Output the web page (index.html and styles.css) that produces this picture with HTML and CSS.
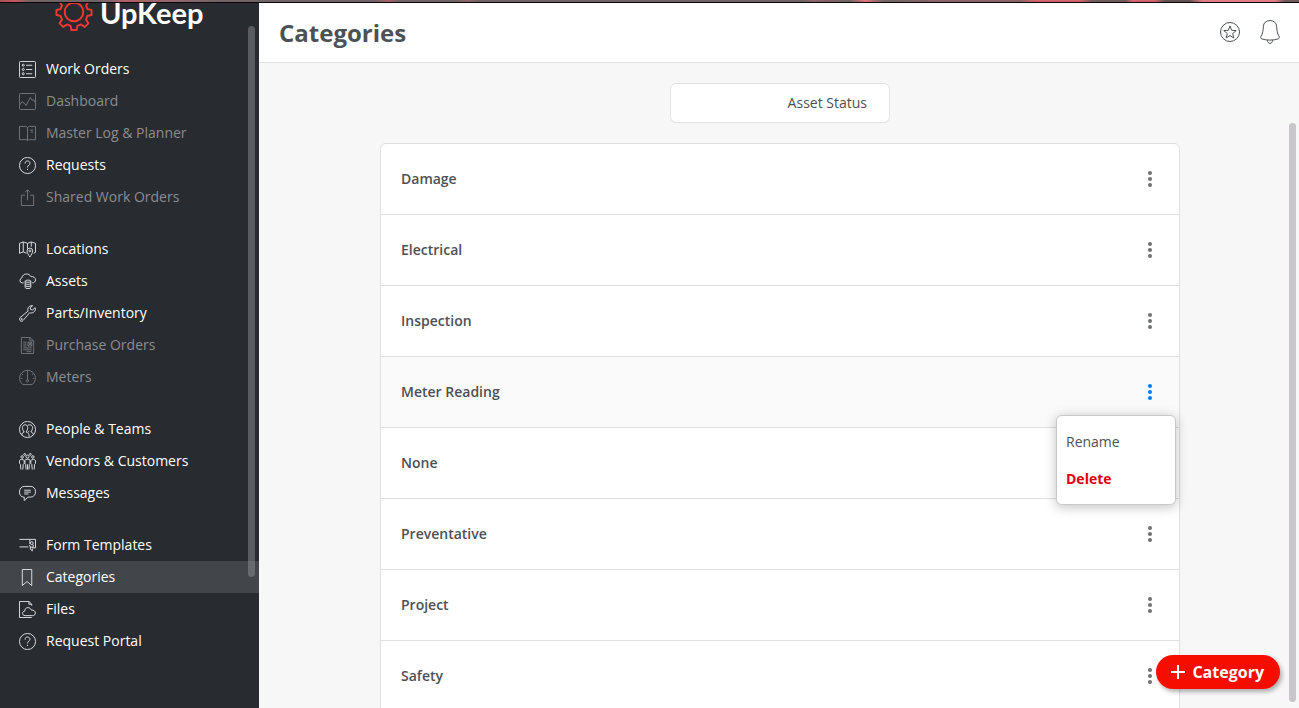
FILE: index.html
```html
<!DOCTYPE html>
<html lang="en">
<head>
<meta charset="utf-8">
<title>Categories - UpKeep</title>
<link rel="stylesheet" href="styles.css">
</head>
<body>
<div class="strip"></div>
<div class="app">
  <aside class="sidebar">
    <a class="logo" href="#">
      <svg class="gear" viewBox="0 0 40 40"><circle cx="20" cy="20" r="9.8"/><path d="M17.300 1.700h5.400l.9 4.600 3.800 1.600 4-2.500 3.800 3.800-2.600 3.900 1.600 3.900 4.300.9v5.300l-4.300.9-1.600 3.900 2.600 3.900-3.800 3.800-4-2.600-3.800 1.600-.9 4.300h-5.400l-.9-4.300-3.800-1.600-4 2.600-3.800-3.800 2.600-3.900-1.600-3.900-4.300-.9v-5.300l4.300-.9 1.600-3.900-2.600-3.900 3.800-3.800 4 2.500 3.800-1.600z"/></svg>
      <span>UpKeep</span>
    </a>
    <nav class="nav">
      <div class="group">
        <a class="item" href="#"><svg class="icon" viewBox="0 0 18 18"><rect x=".5" y=".5" width="17" height="17" rx="1"/><circle cx="4.500" cy="4.500" r="1.100"/><circle cx="4.500" cy="9" r="1.100"/><circle cx="4.500" cy="13.500" r="1.100"/><path d="M7.500 4.500H14M7.500 9H14M7.500 13.500H14"/></svg>Work Orders</a>
        <a class="item dim" href="#"><svg class="icon" viewBox="0 0 18 18"><rect x=".5" y=".5" width="17" height="17" rx="1"/><path d="M.5 13l2.700-3.800 2.500 1.600 1.800 2.400L12 4.700l1.800 3 1.400-.7 2.300 3.500"/></svg>Dashboard</a>
        <a class="item dim" href="#"><svg class="icon" viewBox="0 0 18 18"><path d="M9 3.200C8.500 2 8 1.500 7 1.500H.5v14H7c1 0 1.500.3 2 1 .5-.7 1-1 2-1h6.500v-14H11c-1 0-1.500.5-2 1.700v13.300M11.500 5.500H15M12.500 7.500H15"/></svg>Master Log &amp; Planner</a>
        <a class="item" href="#"><svg class="icon" viewBox="0 0 18 18"><circle cx="9" cy="9" r="8.500"/><path d="M6.500 7C6.500 5 7.500 4.200 9 4.200s2.600.9 2.600 2.400C11.600 8.600 9 8.700 9 11M9 12.500v1.200"/></svg>Requests</a>
        <a class="item dim" href="#"><svg class="icon" viewBox="0 0 18 18"><path d="M6.500 6.500h-4v11h13v-11h-4M9 12V1M6.500 3.500L9 .8l2.500 2.700"/></svg>Shared Work Orders</a>
      </div>
      <div class="group">
        <a class="item" href="#"><svg class="icon" viewBox="0 0 18 18"><path d="M8 13l-3.500-1.500-4 1.500V2.500L4.500 1 9 2.500 13 1l4.500 1.500V12l-2 1M4.500 1v10.500M9 2.500V8M13 1v5M11.500 17C10 14.500 8.500 12.500 8.500 10.500a3 3 0 0 1 6 0c0 2-1.500 4-3 6.500z"/><circle cx="11.500" cy="10.500" r="1"/></svg>Locations</a>
        <a class="item" href="#"><svg class="icon" viewBox="0 0 18 18"><path d="M5 10.500H3.500a2.600 2.600 0 0 1-.6-5.100C3.500 2.500 5.500 1 8 1c2 0 3.500 1 4.500 2.700C15.500 3.500 17.500 5.200 17.500 7.300c0 1.900-1.500 3.200-3.500 3.200"/><ellipse cx="9.500" cy="8.700" rx="3" ry="1.200"/><path d="M6.500 8.700v6.600c0 1.600 6 1.600 6 0V8.700M6.500 11c0 1.500 6 1.500 6 0M6.500 13.200c0 1.500 6 1.500 6 0"/></svg>Assets</a>
        <a class="item" href="#"><svg class="icon" viewBox="0 0 18 18"><path d="M14.500.8C12 .2 9.300 2 9.300 4.800c0 .7.100 1.200.3 1.700L1.200 13.300c-1 .9-1 2.300-.1 3.200.9 1 2.400.9 3.200-.1l7-8.200c3 1 6-.9 6.100-4.100l-.3-1.400-2.600 2.500-2.200-.4-.5-2.100z"/><circle cx="2.800" cy="14.900" r=".7"/></svg>Parts/Inventory</a>
        <a class="item dim" href="#"><svg class="icon" viewBox="0 0 18 18"><path d="M2.500.5h9l4 3.500v13.500h-13zM11.500.5V4h4M4.500 5.500H8M4.500 7.500H8M4.500 9.500H8M4.500 11.500h9M4.500 13.500h9M8 15.500h5M9.500 5.500h4v4h-4zM9.500 5.500l4 4M13.500 5.500l-4 4"/></svg>Purchase Orders</a>
        <a class="item dim" href="#"><svg class="icon" viewBox="0 0 18 18"><path d="M4 16.500a8.400 8.400 0 1 1 10 0zM9 3.500v8M9 1v2M3 5l1.200 1M15 5l-1.200 1M2 10h1.500M14.500 10H16"/><circle cx="9" cy="12.500" r="1.200"/></svg>Meters</a>
      </div>
      <div class="group">
        <a class="item" href="#"><svg class="icon" viewBox="0 0 18 18"><circle cx="9" cy="9" r="8.500"/><path d="M3 15c0-2 .7-2.500 2.500-3.300C4 10 3.700 8.500 3.700 7 3.700 5 5 4 6.500 4S9.200 5 9.200 7c0 1.500-.5 3-1.700 4.700 2.300.8 3.200 1.600 3.200 4.800M9 5.200c.7-1 1.300-1.200 2.400-1.200C13.200 4 14.300 5.200 14.300 7c0 1.800-.6 3.200-1.800 4.500 2 .7 2.500 1.300 2.700 3M9.500 11.700l1.200-.7"/></svg>People &amp; Teams</a>
        <a class="item" href="#"><svg class="icon" viewBox="0 0 18 18"><circle cx="9" cy="3.800" r="1.600"/><circle cx="3.300" cy="4.200" r="1.300"/><circle cx="14.700" cy="4.200" r="1.300"/><circle cx="6" cy="1.500" r="1"/><circle cx="12" cy="1.500" r="1"/><path d="M7.500 17.500L7 12l-.7-1V7.500c0-1.200 5.400-1.200 5.400 0V11l-.7 1-.5 5.500M9 12v5.500M2 17.500L1.500 12l-1-1V8c0-1.500 4.500-1.500 5 0v3l-1 1-.5 5.500M16 17.500l.5-5.500 1-1V8c0-1.500-4.500-1.500-5 0v3l1 1 .5 5.500"/></svg>Vendors &amp; Customers</a>
        <a class="item" href="#"><svg class="icon" viewBox="0 0 18 18"><path d="M5.500 16.500v-3.700H4.800C2.200 12.800.5 10.500.5 7.500c0-3.500 2-6 5-6h7c3 0 5 2.500 5 5.600 0 3.200-2 5.700-5 5.700H9.500zM5.500 5.500h7M5.500 7.500h7M5.500 9.500H10"/></svg>Messages</a>
      </div>
      <div class="group">
        <a class="item" href="#"><svg class="icon" viewBox="0 0 18 18"><path d="M.5 2.500h17v9h-3M.5 10.500h9.500M11.500 2.500v5"/><circle cx="13.500" cy="6.500" r="1.500"/><path d="M11 8.500l1 2 3 .5v-3M12 10.500v2.500l2 1.500M14 12v3"/></svg>Form Templates</a>
        <a class="item active" href="#"><svg class="icon" viewBox="0 0 18 18"><path d="M3.500.5H13.500v17L8.500 13.300l-5 4.200z"/></svg>Categories</a>
        <a class="item" href="#"><svg class="icon" viewBox="0 0 18 18"><path d="M13.500 5V3.500l-3-3H.5v17h13M10.500.5v3h3M6.500 15.500c-2 0-2.700-1.200-2.700-2.500 0-1.400 1-2.300 2.300-2.300C6 8.500 7.500 7 9.500 7c1.700 0 3 .9 3.500 2.600 2.500-.2 4.300 1 4.300 3.100 0 1.800-1.200 2.800-2.800 2.800z"/></svg>Files</a>
        <a class="item" href="#"><svg class="icon" viewBox="0 0 18 18"><circle cx="9" cy="9" r="8.500"/><path d="M6.500 7C6.500 5 7.500 4.200 9 4.200s2.600.9 2.600 2.400C11.600 8.600 9 8.700 9 11M9 12.500v1.200"/></svg>Request Portal</a>
      </div>
    </nav>
    <div class="side-thumb"></div>
  </aside>
  <main class="main">
    <header class="header">
      <h1>Categories</h1>
      <button class="icon-btn" aria-label="Favorites"><svg width="20" height="20" viewBox="0 0 20 20"><circle cx="10" cy="10" r="9.500"/><path d="M10 4l1.700 4.300 4.500.3-3.500 2.900 1.100 4.500L10 13.500 6.200 16l1.100-4.500-3.500-2.900 4.500-.3z"/></svg></button>
      <button class="icon-btn" aria-label="Notifications"><svg width="20" height="24" viewBox="0 0 20 24"><path d="M10 .6c3.800 0 6.300 2 6.600 5.600.3 4.300.6 7.300 2.400 10 .8 1.700.2 2.300-.8 2.700-4.600 1.600-11.800 1.600-16.400 0-1-.4-1.600-1-.8-2.700 1.800-2.700 2.100-5.700 2.400-10C3.700 2.600 6.200.6 10 .6zM7.300 20.200c.2 1.700 1.200 3.200 2.700 3.200s2.500-1.500 2.700-3.200"/></svg></button>
    </header>
    <section class="content">
      <div class="tabs"><button class="tab">Asset Status</button></div>
      <ul class="list">
        <li class="row"><span>Damage</span><button class="more" aria-label="Options for Damage"><i></i><i></i><i></i></button></li>
        <li class="row"><span>Electrical</span><button class="more" aria-label="Options for Electrical"><i></i><i></i><i></i></button></li>
        <li class="row"><span>Inspection</span><button class="more" aria-label="Options for Inspection"><i></i><i></i><i></i></button></li>
        <li class="row open"><span>Meter Reading</span><button class="more" aria-label="Options for Meter Reading"><i></i><i></i><i></i></button>
          <div class="menu"><button>Rename</button><button class="danger">Delete</button></div>
        </li>
        <li class="row"><span>None</span><button class="more" aria-label="Options for None"><i></i><i></i><i></i></button></li>
        <li class="row"><span>Preventative</span><button class="more" aria-label="Options for Preventative"><i></i><i></i><i></i></button></li>
        <li class="row"><span>Project</span><button class="more" aria-label="Options for Project"><i></i><i></i><i></i></button></li>
        <li class="row"><span>Safety</span><button class="more" aria-label="Options for Safety"><i></i><i></i><i></i></button></li>
      </ul>
      <div class="main-thumb"></div>
    </section>
    <button class="add"><svg width="14" height="14" viewBox="0 0 14 14"><path d="M7 0v14M0 7h14"/></svg>Category</button>
  </main>
</div>
</body>
</html>
```
FILE: styles.css
```css
* { box-sizing: border-box; }
body {
  margin: 0;
  height: 100vh;
  display: flex;
  flex-direction: column;
  overflow: hidden;
  font: 14px/20px "Open Sans", "Noto Sans", sans-serif;
  color: #4d5156;
}
button { font: inherit; color: inherit; background: none; border: 0; padding: 0; cursor: pointer; }
a { color: inherit; text-decoration: none; }
svg { fill: none; flex: none; }

.strip {
  flex: none;
  height: 3px;
  border-bottom: 1px solid #0c0406;
  background: linear-gradient(90deg, #a8525a 0, #c4575f 15px, #6f6566 30px, #6f6566 100px, #b0606a 125px, #8a686b 180px, #6f6566 220px, #6f6566 375px, #a85f66 388px, #6f6566 400px, #6f6566 455px, #8d6367 468px, #6f6566 480px, #6f6566 800px, #8d6367 815px, #6f6566 850px, #e0737c 865px, #6f6566 885px, #8a6468 940px, #8a6468 1020px, #d0636c 1035px, #d0636c 1080px, #6f5a5c 1092px, #6f5a5c 1125px, #d0636c 1132px, #d0636c 1155px, #655254 1165px, #655254 1190px, #e07d86 1202px, #e07d86 1275px, #6f5a5c 1285px);
}
.app { flex: 1; min-height: 0; display: flex; }

.sidebar { position: relative; flex: none; width: 259px; background: #282b30; color: #fff; overflow: hidden; }
.logo { display: flex; align-items: flex-start; gap: 7px; height: 30px; margin-bottom: 20px; padding-left: 55px; }
.gear { width: 38px; height: 38px; margin-top: -10px; stroke: #fa372f; stroke-width: 2; stroke-linejoin: round; }
.logo span { font: 700 29px/20px Lato, sans-serif; }
.group { margin-bottom: 20px; }
.item { display: flex; align-items: center; gap: 10px; height: 32px; padding-left: 19px; }
.icon { width: 17px; height: 17px; stroke: #e2e3e4; stroke-width: 1; }
.dim { color: #8b8d90; }
.dim .icon { stroke: #74777a; }
.active { background: #424549; }
.side-thumb { position: absolute; right: 4px; top: 23px; width: 7px; height: 551px; border-radius: 4px; background: rgba(160, 160, 165, .42); }

.main { position: relative; flex: 1; min-width: 0; display: flex; flex-direction: column; background: #f7f7f7; }
.header { display: flex; align-items: center; gap: 20px; height: 60px; padding: 0 19px 0 20px; background: #fff; border-bottom: 1px solid #dfe0e0; }
.header h1 { flex: 1; margin: 0; font-size: 24px; line-height: 32px; font-weight: 700; }
.icon-btn { display: flex; padding-bottom: 2px; }
.icon-btn svg { stroke: #4d5156; stroke-width: 1; }

.content { position: relative; flex: 1; min-height: 0; overflow: hidden; padding: 20px 20px 0 22px; }
.tabs { display: flex; justify-content: flex-end; width: 220px; height: 40px; margin: 0 auto 20px; padding-right: 22px; background: #fff; border: 1px solid #e2e2e2; border-radius: 6px; }
.list { max-width: 800px; margin: 0 auto; padding: 0; list-style: none; background: #fff; border: 1px solid #dfdfe0; border-radius: 6px 6px 0 0; }
.row { position: relative; display: flex; align-items: center; justify-content: space-between; height: 71px; padding: 0 20px; border-bottom: 1px solid #dfdfe0; font-weight: 600; }
.open { background: #fafafa; }
.more { display: flex; flex-direction: column; align-items: center; justify-content: center; gap: 2px; width: 18px; height: 24px; color: #707173; }
.more i { width: 4px; height: 4px; border-radius: 50%; background: currentColor; }
.open .more { color: #087df7; }
.menu { position: absolute; z-index: 2; right: 3px; top: 58px; width: 120px; padding: 7px 0; background: #fff; border: 1px solid #c9c9ca; border-radius: 6px; box-shadow: 0 2px 12px rgba(0, 0, 0, .25); }
.menu button { display: block; width: 100%; height: 37px; padding: 0 9px; text-align: left; font-weight: 400; }
.menu .danger { color: #e1000f; font-weight: 700; }

.main-thumb { position: absolute; right: 3px; top: 60px; bottom: 6px; width: 7px; border-radius: 4px; background: #c8c5cb; }
.add { position: absolute; z-index: 3; right: 19px; bottom: 19px; display: flex; align-items: center; gap: 7px; height: 34px; padding: 0 16px 0 15px; border-radius: 17px; background: #f70d00; color: #fff; font-size: 16px; font-weight: 700; box-shadow: 2px 3px 4px rgba(0, 0, 0, .3); }
.add svg { stroke: #fff; stroke-width: 2; }
```
